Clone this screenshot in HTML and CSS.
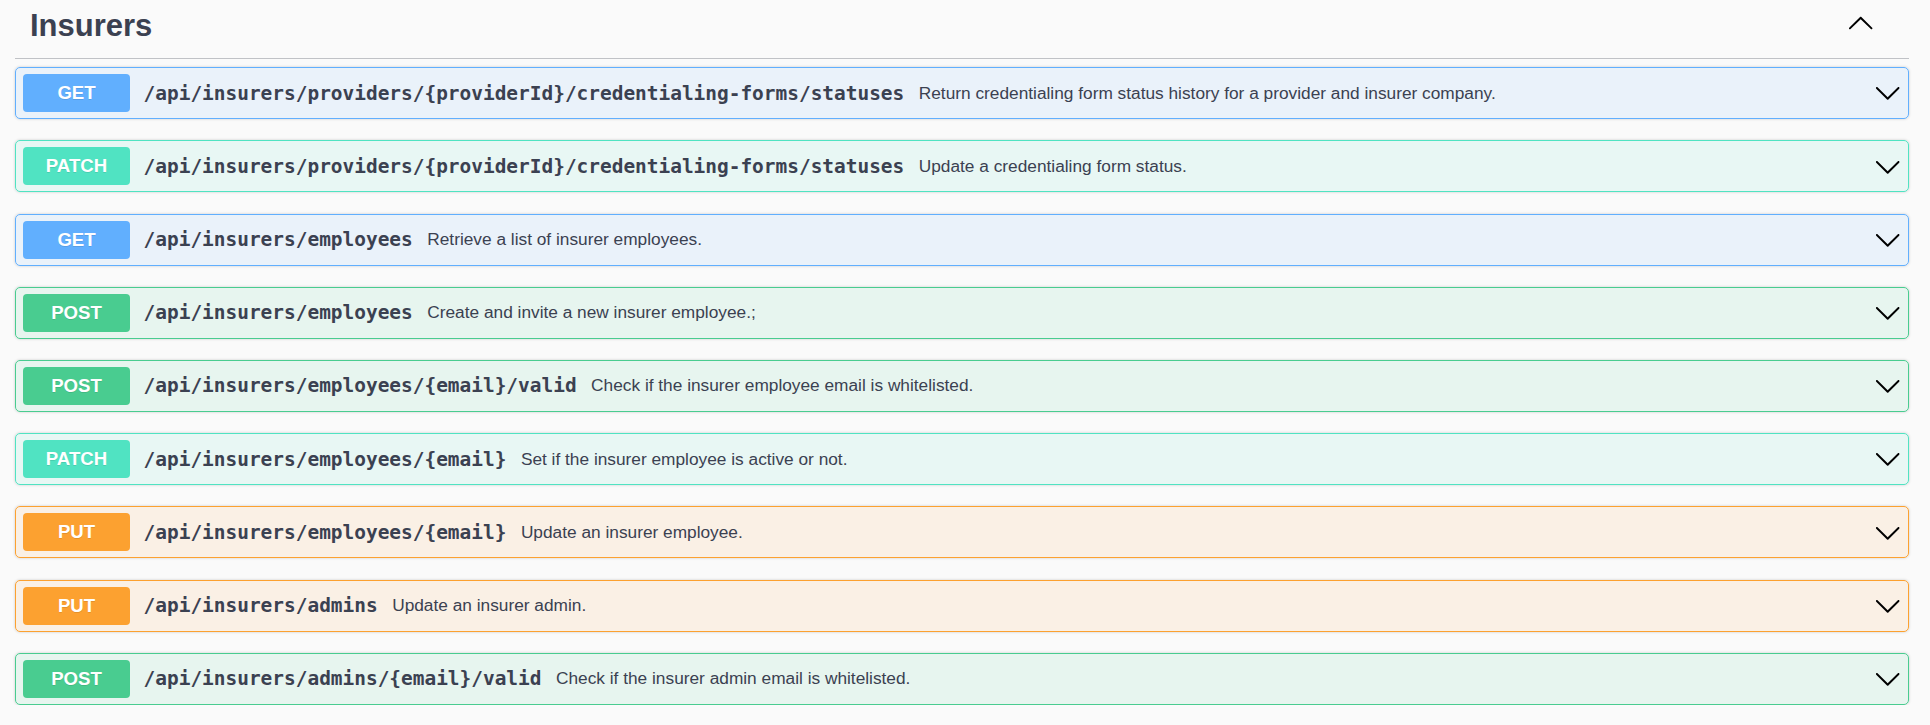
FILE: index.html
```html
<!DOCTYPE html>
<html>
<head>
<meta charset="utf-8">
<link rel="stylesheet" href="styles.css">
</head>
<body>
<div class="tag-section">
  <div class="tag-header">
    <h3 class="tag-title">Insurers</h3>
    <button class="tag-toggle" aria-label="collapse">
      <svg class="arrow arrow-up" viewBox="0 0 20 20"><path d="M17.418 6.109c.272-.268.709-.268.979 0s.271.701 0 .969l-7.908 7.83c-.27.268-.707.268-.979 0l-7.908-7.83c-.27-.268-.27-.701 0-.969.271-.268.709-.268.979 0L10 13.25l7.418-7.141z"/></svg>
    </button>
  </div>

  <div class="opblock get">
    <span class="method">GET</span>
    <span class="path">/api/insurers/providers/{providerId}/credentialing-forms/statuses</span>
    <span class="desc">Return credentialing form status history for a provider and insurer company.</span>
    <svg class="arrow" viewBox="0 0 20 20"><path d="M17.418 6.109c.272-.268.709-.268.979 0s.271.701 0 .969l-7.908 7.83c-.27.268-.707.268-.979 0l-7.908-7.83c-.27-.268-.27-.701 0-.969.271-.268.709-.268.979 0L10 13.25l7.418-7.141z"/></svg>
  </div>

  <div class="opblock patch">
    <span class="method">PATCH</span>
    <span class="path">/api/insurers/providers/{providerId}/credentialing-forms/statuses</span>
    <span class="desc">Update a credentialing form status.</span>
    <svg class="arrow" viewBox="0 0 20 20"><path d="M17.418 6.109c.272-.268.709-.268.979 0s.271.701 0 .969l-7.908 7.83c-.27.268-.707.268-.979 0l-7.908-7.83c-.27-.268-.27-.701 0-.969.271-.268.709-.268.979 0L10 13.25l7.418-7.141z"/></svg>
  </div>

  <div class="opblock get">
    <span class="method">GET</span>
    <span class="path">/api/insurers/employees</span>
    <span class="desc">Retrieve a list of insurer employees.</span>
    <svg class="arrow" viewBox="0 0 20 20"><path d="M17.418 6.109c.272-.268.709-.268.979 0s.271.701 0 .969l-7.908 7.83c-.27.268-.707.268-.979 0l-7.908-7.83c-.27-.268-.27-.701 0-.969.271-.268.709-.268.979 0L10 13.25l7.418-7.141z"/></svg>
  </div>

  <div class="opblock post">
    <span class="method">POST</span>
    <span class="path">/api/insurers/employees</span>
    <span class="desc">Create and invite a new insurer employee.;</span>
    <svg class="arrow" viewBox="0 0 20 20"><path d="M17.418 6.109c.272-.268.709-.268.979 0s.271.701 0 .969l-7.908 7.83c-.27.268-.707.268-.979 0l-7.908-7.83c-.27-.268-.27-.701 0-.969.271-.268.709-.268.979 0L10 13.25l7.418-7.141z"/></svg>
  </div>

  <div class="opblock post">
    <span class="method">POST</span>
    <span class="path">/api/insurers/employees/{email}/valid</span>
    <span class="desc">Check if the insurer employee email is whitelisted.</span>
    <svg class="arrow" viewBox="0 0 20 20"><path d="M17.418 6.109c.272-.268.709-.268.979 0s.271.701 0 .969l-7.908 7.83c-.27.268-.707.268-.979 0l-7.908-7.83c-.27-.268-.27-.701 0-.969.271-.268.709-.268.979 0L10 13.25l7.418-7.141z"/></svg>
  </div>

  <div class="opblock patch">
    <span class="method">PATCH</span>
    <span class="path">/api/insurers/employees/{email}</span>
    <span class="desc">Set if the insurer employee is active or not.</span>
    <svg class="arrow" viewBox="0 0 20 20"><path d="M17.418 6.109c.272-.268.709-.268.979 0s.271.701 0 .969l-7.908 7.83c-.27.268-.707.268-.979 0l-7.908-7.83c-.27-.268-.27-.701 0-.969.271-.268.709-.268.979 0L10 13.25l7.418-7.141z"/></svg>
  </div>

  <div class="opblock put">
    <span class="method">PUT</span>
    <span class="path">/api/insurers/employees/{email}</span>
    <span class="desc">Update an insurer employee.</span>
    <svg class="arrow" viewBox="0 0 20 20"><path d="M17.418 6.109c.272-.268.709-.268.979 0s.271.701 0 .969l-7.908 7.83c-.27.268-.707.268-.979 0l-7.908-7.83c-.27-.268-.27-.701 0-.969.271-.268.709-.268.979 0L10 13.25l7.418-7.141z"/></svg>
  </div>

  <div class="opblock put">
    <span class="method">PUT</span>
    <span class="path">/api/insurers/admins</span>
    <span class="desc">Update an insurer admin.</span>
    <svg class="arrow" viewBox="0 0 20 20"><path d="M17.418 6.109c.272-.268.709-.268.979 0s.271.701 0 .969l-7.908 7.83c-.27.268-.707.268-.979 0l-7.908-7.83c-.27-.268-.27-.701 0-.969.271-.268.709-.268.979 0L10 13.25l7.418-7.141z"/></svg>
  </div>

  <div class="opblock post">
    <span class="method">POST</span>
    <span class="path">/api/insurers/admins/{email}/valid</span>
    <span class="desc">Check if the insurer admin email is whitelisted.</span>
    <svg class="arrow" viewBox="0 0 20 20"><path d="M17.418 6.109c.272-.268.709-.268.979 0s.271.701 0 .969l-7.908 7.83c-.27.268-.707.268-.979 0l-7.908-7.83c-.27-.268-.27-.701 0-.969.271-.268.709-.268.979 0L10 13.25l7.418-7.141z"/></svg>
  </div>
</div>
</body>
</html>
```

FILE: styles.css
```css
html, body {
  margin: 0;
  padding: 0;
  background: #fafafa;
}

body {
  font-family: "Liberation Sans", Arial, sans-serif;
  color: #3b4151;
}

.tag-section {
  margin: 0 21px 0 15px;
  display: flex;
  flex-direction: column;
  gap: 21.2px;
}

.tag-header {
  display: flex;
  align-items: center;
  height: 50px;
  padding: 8px 35px 0 15px;
  border-bottom: 1px solid rgba(59, 65, 81, 0.3);
  margin-bottom: -13px;
}

.tag-title {
  margin: 0;
  font-size: 31px;
  font-weight: bold;
  line-height: 35px;
  color: #3b4151;
  flex: 1;
  align-self: flex-start;
}

.tag-toggle {
  background: none;
  border: 0;
  padding: 0;
  margin: -18px 0 0 0;
  display: flex;
  cursor: pointer;
}

.arrow {
  width: 27.4px;
  height: 27.4px;
  fill: #000;
  flex: none;
}

.arrow-up {
  transform: rotate(180deg);
}

.opblock {
  display: flex;
  align-items: center;
  height: 38px;
  padding: 6px 7px;
  border: 1px solid;
  border-radius: 5px;
  box-shadow: 0 0 3px rgba(0, 0, 0, 0.19);
}

.method {
  flex: none;
  width: 107px;
  height: 38px;
  border-radius: 4px;
  display: flex;
  align-items: center;
  justify-content: center;
  color: #fff;
  font-weight: bold;
  font-size: 18.6px;
  text-shadow: 0 1px 0 rgba(0, 0, 0, 0.1);
}

.path {
  margin-left: 13.6px;
  font-family: "DejaVu Sans Mono", "Liberation Mono", monospace;
  font-weight: bold;
  font-size: 19.45px;
  color: #3b4151;
  white-space: nowrap;
}

.desc {
  margin-left: 14.5px;
  font-size: 17.3px;
  color: #3b4151;
  flex: 1;
  white-space: nowrap;
}

.get { background: rgba(97, 175, 254, 0.1); border-color: #61affe; }
.get .method { background: #61affe; }

.post { background: rgba(73, 204, 144, 0.1); border-color: #49cc90; }
.post .method { background: #49cc90; }

.patch { background: rgba(80, 227, 194, 0.1); border-color: #50e3c2; }
.patch .method { background: #50e3c2; }

.put { background: rgba(252, 161, 48, 0.1); border-color: #fca130; }
.put .method { background: #fca130; }
```
